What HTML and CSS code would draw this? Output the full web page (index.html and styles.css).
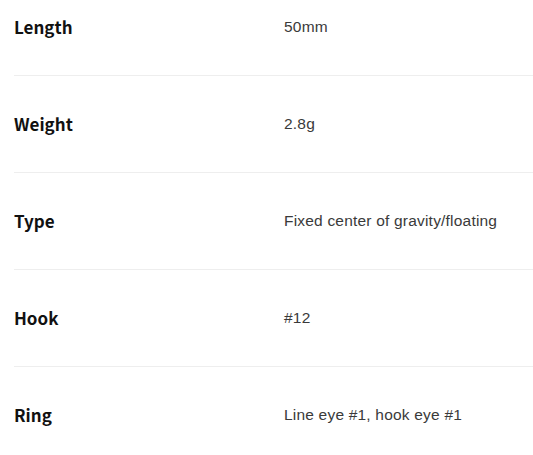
FILE: index.html
```html
<!DOCTYPE html>
<html lang="en">
<head>
<meta charset="utf-8">
<title>Spec</title>
<link rel="stylesheet" href="styles.css">
</head>
<body>
<dl class="spec">
  <div class="row first"><dt class="label">Length</dt><dd class="value">50mm</dd></div>
  <div class="row"><dt class="label">Weight</dt><dd class="value">2.8g</dd></div>
  <div class="row"><dt class="label">Type</dt><dd class="value">Fixed center of gravity/floating</dd></div>
  <div class="row"><dt class="label">Hook</dt><dd class="value">#12</dd></div>
  <div class="row"><dt class="label">Ring</dt><dd class="value">Line eye #1, hook eye #1</dd></div>
</dl>
</body>
</html>
```
FILE: styles.css
```css
html, body {
  margin: 0;
  padding: 0;
  background: #ffffff;
}
.spec {
  margin: 0;
  padding: 0 0 0 14px;
}
.row {
  display: grid;
  grid-template-columns: 270px 1fr;
  align-items: center;
  height: 96px;
  border-bottom: 1px solid #eeeeee;
}
.row.first {
  height: 75px;
  align-items: start;
}
.row.first .label,
.row.first .value {
  margin-top: 14px;
}
.row:last-child {
  border-bottom: none;
}
.label {
  margin: 0;
  font-family: "Noto Sans CJK JP", "Noto Sans", sans-serif;
  font-weight: 700;
  font-size: 17px;
  line-height: 26px;
  color: #111111;
}
.value {
  margin: 0;
  font-family: "Liberation Sans", Arial, sans-serif;
  font-weight: 400;
  font-size: 15.5px;
  letter-spacing: 0.2px;
  line-height: 26px;
  color: #3a3a3a;
}
```
